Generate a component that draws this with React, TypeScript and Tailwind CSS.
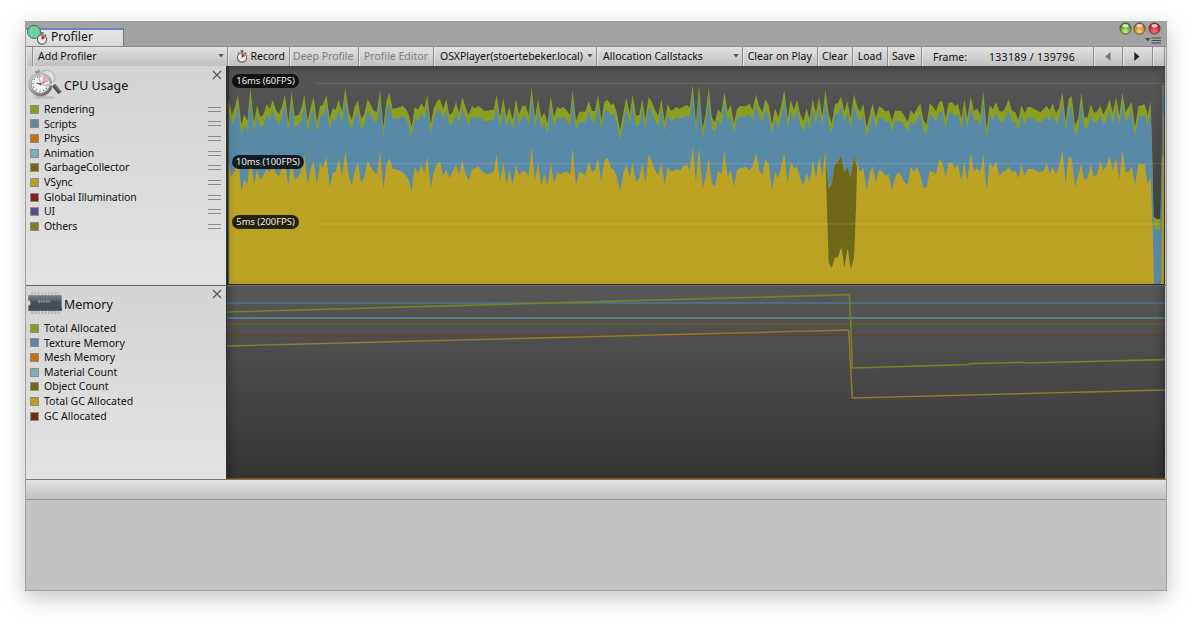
import { ReactNode } from "react";

type Entry = { name: string; swatch: string };
type Segment = [number, string];

const cpuEntries: Entry[] = [
  { name: "Rendering", swatch: "bg-[#8a9f22]" },
  { name: "Scripts", swatch: "bg-[#588aa8]" },
  { name: "Physics", swatch: "bg-[#c27311]" },
  { name: "Animation", swatch: "bg-[#7ab0ba]" },
  { name: "GarbageCollector", swatch: "bg-[#706a17]" },
  { name: "VSync", swatch: "bg-[#bba223]" },
  { name: "Global Illumination", swatch: "bg-[#7c270c]" },
  { name: "UI", swatch: "bg-[#614b8b]" },
  { name: "Others", swatch: "bg-[#7d7d25]" },
];

const memoryEntries: Entry[] = [
  { name: "Total Allocated", swatch: "bg-[#8a9f22]" },
  { name: "Texture Memory", swatch: "bg-[#588aa8]" },
  { name: "Mesh Memory", swatch: "bg-[#c27311]" },
  { name: "Material Count", swatch: "bg-[#7ab0ba]" },
  { name: "Object Count", swatch: "bg-[#706a17]" },
  { name: "Total GC Allocated", swatch: "bg-[#bba223]" },
  { name: "GC Allocated", swatch: "bg-[#7c270c]" },
];

// each segment is an x offset followed by x,y samples, three units per pixel
const renderingTop: Segment[] = [
  [0, "8,106 18,150 27,125 36,90 46,178 55,148 64,168 73,70 84,172 93,120 103,155 112,150 122,117 131,133 140,105 150,135 159,148 168,125 177,88 187,172 197,78 206,153 217,150 226,132 235,90 245,168 254,125 263,96 273,172 282,123 291,120 301,90 311,160 320,130 329,135 338,103 348,140 358,68 368,138 377,165 386,125 396,106 405,160 414,150 425,103 434,120 444,138 453,140 462,75 472,185 481,110 490,82 500,132 515,128 530,123 540,132 548,148 557,185 566,126 576,135 586,115 595,130 604,90 614,178 623,130 633,108 642,102 651,132 661,103 670,150 680,142 690,110 699,145 709,96 718,125 728,150 738,123 747,130 757,123 775,138 803,134 812,90 822,155 832,100 841,155 850,125 860,165 870,101 879,148 889,122 899,122 908,150 917,66 927,157 936,102 946,158 955,142"],
  [960, "5,175 14,92 24,155 34,125 43,132 52,125 62,136 72,150 80,76 90,168 100,140 118,140 128,107 138,138 147,138 156,88 166,165 175,110 185,104 195,120 203,115 213,145 222,195 232,145 241,97 251,148 260,88 270,152 280,150 289,102 298,163 308,96 318,112 327,136 337,152 346,102 356,170 365,117 375,138 392,126 400,131 422,120 431,128 440,60 450,172 459,60 470,190 479,145 488,68 498,160 507,170 516,133 526,145 535,80 545,140 554,118 564,175 573,132 583,123 600,124 611,116 620,135 630,88 640,125 649,142 658,103 668,120 678,178 687,130 697,155 706,120 715,75 725,160 734,105 744,135 753,105 763,148 772,168 782,130 791,162 800,102 810,145 819,95 829,152 838,75 848,148 857,175 867,117 876,115 885,94 895,140 904,108 914,160 924,87 934,125"],
  [1902, "0,140 10,117 20,188 29,150 38,115 48,160 57,124 67,130 77,140 86,135 96,168 105,137 123,137 133,152 143,170 152,135 162,148 171,130 181,115 190,165 200,178 209,115 219,125 228,138 238,110 247,108 257,158 266,113 276,112 285,123 294,116 304,160 313,103 322,160 332,95 342,138 351,130 361,150 370,80 380,190 389,120 398,133 408,112 418,138 428,140 437,125 446,103 456,138 466,142 475,165 484,120 494,145 503,126 512,126 541,142 560,123 569,136 578,115 588,145 597,130 607,80 617,170 626,103 635,92 645,180 655,160 664,82 673,157 683,157 692,118 702,143 711,140 721,122 730,148 740,130 749,103 758,145 768,97 778,150 787,83 797,142 806,125 815,110 825,185 835,124 854,118 863,150 872,108 876,240 881,455 890,462 901,463 903,380 906,220 908,60 912,60"],
];

const vsyncTop: Segment[] = [
  [0, "8,290 16,335 27,315 36,270 46,378 55,342 64,360 73,263 84,358 93,315 103,345 112,330 122,312 131,322 140,300 150,325 159,335 168,310 177,290 187,362 197,268 206,345 217,335 226,315 235,270 245,357 254,310 263,288 273,357 282,295 291,308 301,273 311,365 320,325 329,320 338,278 348,335 358,258 368,330 377,362 386,318 396,292 405,352 414,338 425,288 434,305 444,320 453,328 462,258 472,370 481,300 490,278 500,312 515,314 530,322 548,342 557,380 566,305 576,325 586,300 595,322 604,275 614,370 623,322 633,298 642,290 651,332 661,315 670,340 680,320 690,298 699,330 709,285 718,325 728,347 738,312 747,310 757,303 766,318 785,328 803,320 812,268 822,347 832,290 841,357 850,318 860,357 870,300 879,330 889,318 899,320 908,332 917,245 927,347 936,295 946,360 955,328"],
  [960, "5,362 14,295 24,355 34,322 43,328 62,318 72,330 80,250 90,358 100,320 118,330 128,290 138,322 147,315 156,278 166,350 175,288 185,278 195,310 203,313 213,335 222,378 232,325 241,298 251,335 260,292 270,350 280,340 289,290 298,355 308,268 318,292 327,315 337,330 346,294 356,357 365,305 375,320 392,313 403,317 412,302 422,298 431,315 440,246 450,352 459,248 470,372 479,335 488,278 498,355 507,363 516,318 526,327 535,258 545,335 554,315 564,367 573,315 583,310 600,305 611,316 620,304 630,265 640,315 649,330 658,282 668,298 678,377 687,320 697,340 706,300 715,265 725,353 734,290 744,310 753,305 763,340 772,362 782,325 791,350 800,288 810,338 819,275 829,333 838,255 843,325 848,372 857,358 867,297 876,290 885,272 895,322 904,305 914,340 924,273 934,300"],
  [1902, "0,320 10,308 20,375 29,325 38,304 48,350 57,313 67,320 77,333 86,328 96,375 105,337 115,322 124,332 133,352 143,360 152,305 162,320 171,305 181,330 190,368 200,366 209,317 219,320 228,326 238,284 247,292 257,335 266,293 276,293 285,310 294,298 304,347 313,290 322,348 332,265 342,318 351,310 361,320 370,268 380,376 389,292 398,308 408,290 418,332 428,320 437,317 446,305 456,320 466,317 475,340 484,298 494,332 503,312 518,312 536,322 551,317 560,295 569,326 578,305 588,328 597,305 607,255 617,353 626,276 635,280 645,365 655,330 664,295 673,345 683,340 692,298 702,335 711,328 721,290 730,318 740,300 749,273 758,318 768,278 778,343 787,255 797,323 806,320 816,305 825,360 835,297 854,297 863,357 872,335 878,500 882,657 903,657 906,450 909,150 912,150"],
];

function area(segments: Segment[]) {
  const points = segments.flatMap(([offset, data]) =>
    data.split(" ").map((pair) => {
      const [x, y] = pair.split(",").map(Number);
      return `${x + offset},${y}`;
    })
  );
  return `8,657 ${points.join(" ")} 2814,657`;
}

function StopwatchIcon() {
  return (
    <svg className="h-[13px] w-[12px] shrink-0" viewBox="0 0 12 13">
      <path d="M4.4 .8h3.2M6 1v2M10 2.6l-1 1M2 2.6l1 1" stroke="#555" strokeWidth="1.3" fill="none" />
      <circle cx="6" cy="7.5" r="4.6" fill="#eee" stroke="#666" strokeWidth="1.2" />
      <path d="M6 7.5V3.8a3.7 3.7 0 0 1 3.2 2.1z" fill="#e22134" />
      <path d="M6 7.6V4" stroke="#a11" strokeWidth=".7" />
    </svg>
  );
}

function CpuIcon() {
  return (
    <svg className="h-[31px] w-[36px] shrink-0" viewBox="0 0 36 31">
      <defs>
        <linearGradient id="steel" x1="0" y1="0" x2="1" y2="1">
          <stop offset="0" stopColor="#eee" />
          <stop offset=".5" stopColor="#999" />
          <stop offset="1" stopColor="#505050" />
        </linearGradient>
      </defs>
      <ellipse cx="16" cy="28.5" rx="11" ry="1.6" fill="#000" opacity=".12" />
      <path d="M7 3.5l5-2M9.5 2.5l1.5 4" stroke="#999" strokeWidth="2.4" />
      <circle cx="12.5" cy="15.5" r="11.8" fill="url(#steel)" stroke="#888" strokeWidth=".6" />
      <circle cx="12.5" cy="15" r="9.3" fill="#f3f3f3" stroke="#888" strokeWidth=".8" />
      <circle cx="12.5" cy="15" r="7.4" fill="none" stroke="#555" strokeWidth="1.3" strokeDasharray="1 2.87" />
      <path d="M13 15l2.5-8.5a10 10 0 0 1 6 5z" fill="#ea6a6a" opacity=".7" />
      <path d="M12.5 15l5-2.5M12.5 15l-4-1" stroke="#444" strokeWidth="1" />
      <circle cx="12.5" cy="15" r="1.2" fill="#444" />
      <circle cx="19" cy="9" r="7.8" fill="#fff" fillOpacity=".28" stroke="#bbb" strokeWidth="1.4" />
      <path d="M24 14.5l3 3" stroke="#e4e4e4" strokeWidth="3.6" />
      <path d="M25.5 16l6.5 8" stroke="#4c4c4c" strokeWidth="4" />
      <path d="M26 15.5l6 7.5" stroke="#999" strokeWidth=".8" />
    </svg>
  );
}

function ChipIcon() {
  return (
    <svg className="h-[24px] w-[36px] shrink-0" viewBox="0 0 36 24">
      <defs>
        <linearGradient id="chip" x1="0" y1="0" x2="0" y2="1">
          <stop offset="0" stopColor="#747b83" />
          <stop offset=".5" stopColor="#50575f" />
          <stop offset="1" stopColor="#3a4149" />
        </linearGradient>
      </defs>
      <path d="M3 2.8h29" stroke="#bdbdbd" strokeWidth="3" strokeDasharray="2 1.4" />
      <path d="M3 21h29" stroke="#b4b4b4" strokeWidth="4" strokeDasharray="2 1.4" />
      <path d="M.5 4.5h33v15H.5v-5a2.5 2.5 0 0 0 0-5z" fill="url(#chip)" stroke="#747a80" strokeWidth=".5" />
      <path d="M2 11.5h31" stroke="#39414a" strokeWidth="4" opacity=".4" />
      <path d="M10 10.5h12" stroke="#a9afb5" strokeWidth="2.4" strokeDasharray="2 .6" opacity=".6" />
      <path d="M1 17h33v2.5H1z" fill="#434b53" />
    </svg>
  );
}

function WindowLight({ id, outer, inner }: { id: string; outer: string; inner: string }) {
  return (
    <svg className="size-[13px]" viewBox="0 0 13 13">
      <defs>
        <radialGradient id={id} cx=".5" cy=".75" r=".65">
          <stop offset="0" stopColor={inner} />
          <stop offset="1" stopColor={outer} />
        </radialGradient>
      </defs>
      <circle cx="6.5" cy="6.5" r="5.6" fill={`url(#${id})`} stroke="#3d4a28" strokeOpacity=".75" />
      <ellipse cx="6.5" cy="3.7" rx="3.1" ry="1.8" fill="#fff" opacity=".75" />
    </svg>
  );
}

function Caret() {
  return (
    <svg className="mb-px h-[4px] w-[6px] shrink-0" viewBox="0 0 6 4">
      <path d="M.3 0h5.4L3 3.6z" fill="#555" />
    </svg>
  );
}

function ToolbarItem({ className, children }: { className: string; children?: ReactNode }) {
  return (
    <div
      className={`flex h-full shrink-0 items-center whitespace-nowrap border-r border-[#8d8d8d] shadow-[inset_1px_0_0_#e4e4e4] ${className}`}
    >
      {children}
    </div>
  );
}

function Legend({ entries, handles }: { entries: Entry[]; handles?: boolean }) {
  return (
    <ul className="pl-[4px] pr-[5px]">
      {entries.map((entry) => (
        <li key={entry.name} className="flex h-[14.625px] items-center text-[10.5px]">
          <span className={`mr-[5px] size-[9px] shrink-0 border border-[#8c8c8c] ${entry.swatch}`} />
          <span className={`flex-1 pt-px whitespace-nowrap ${handles ? "tracking-[-0.08px]" : ""}`}>{entry.name}</span>
          {handles && <span className="h-[5px] w-[13px] border-y border-[#8a8a8a]" />}
        </li>
      ))}
    </ul>
  );
}

type PanelProps = { icon: ReactNode; title: string; headerClass: string; children: ReactNode };

function ProfilerPanel({ icon, title, headerClass, children }: PanelProps) {
  return (
    <div className="h-full w-[201px] shrink-0 border-r border-[#333] bg-linear-to-b from-[#d4d4d4] to-[#e2e2e2]">
      <div className={`flex items-center pl-[2px] pr-[4px] ${headerClass}`}>
        {icon}
        <span className="flex-1 pt-[4px] text-[12.4px]">{title}</span>
        <svg className="mb-[18px] size-[10px]" viewBox="0 0 10 10">
          <path d="M1 1l8 8M9 1L1 9" stroke="#555" strokeWidth="1.1" />
        </svg>
      </div>
      {children}
    </div>
  );
}

function TimeLabel({ className, children }: { className: string; children: string }) {
  return (
    <span
      className={`absolute left-[5px] flex h-[14px] items-center justify-center rounded-full bg-black/80 text-[9.4px] whitespace-nowrap text-[#eee] ${className}`}
    >
      {children}
    </span>
  );
}

function CpuChart() {
  const rendering = area(renderingTop);
  return (
    <div className="relative h-[219px] w-[938px] bg-linear-to-b from-[#585858] to-[#353535]">
      <svg className="block h-[219px] w-[938px]" viewBox="3 3 2814 657">
        <polygon points={rendering} fill="#8a9f22" />
        <polygon points={rendering} fill="#588aa8" transform="translate(0 31)" />
        <rect x="8" y="657" width="2809" height="3" fill="#3a3a30" />
        <polygon points={area(vsyncTop)} fill="#bba223" />
        <rect x="2809" y="66" width="3" height="210" fill="#4f7488" />
        <polygon
          transform="translate(960 0)"
          points="838,275 843,325 848,372 857,358 867,297 876,290 885,272 895,322 904,305 914,340 924,272 933,305 930,430 924,580 914,612 905,548 895,608 886,545 876,577 867,577 857,610 848,592 843,430"
          fill="#6e6818"
        />
        <path d="M272 58H2817M272 299H2817M272 480H2817" stroke="#fff" strokeOpacity=".11" strokeWidth="4" transform="translate(0 -3)" />
      </svg>
      <div className="pointer-events-none absolute inset-0 shadow-[inset_0_3px_8px_rgba(0,0,0,.3),inset_2px_0_1px_rgba(0,0,0,.3)]" />
      <TimeLabel className="top-[8px] w-[67px]">16ms (60FPS)</TimeLabel>
      <TimeLabel className="top-[89px] w-[72px]">10ms (100FPS)</TimeLabel>
      <TimeLabel className="top-[149px] w-[67px]">5ms (200FPS)</TimeLabel>
    </div>
  );
}

function MemoryChart() {
  return (
    <div className="relative h-[193px] w-[938px] bg-linear-to-b from-[#585858] via-[#474747] to-[#343434]">
      <svg className="block h-[193px] w-[938px]" viewBox="3 18 2814 579" fill="none">
        <path d="M3 69H2817" stroke="#4f6d7e" strokeWidth="6" />
        <path d="M3 114H2817" stroke="#618a90" strokeWidth="5" />
        <path d="M3 132H2817" stroke="#605b2c" strokeWidth="6" />
        <path d="M3 167H2817" stroke="#674130" strokeWidth="6" />
        <path d="M3 96L1870 44L1875 150L1879 264L2222 254L2232 251L2392 247L2398 249L2817 239" stroke="#748126" strokeWidth="4.8" />
        <path d="M3 198L1868 150L1879 354L2817 330" stroke="#8e7b2c" strokeWidth="4.8" />
        <path d="M3 595H2817" stroke="#8a500b" strokeWidth="4" />
      </svg>
      <div className="pointer-events-none absolute inset-0 shadow-[inset_8px_0_8px_-6px_rgba(0,0,0,.35),inset_-8px_0_8px_-6px_rgba(0,0,0,.35)]" />
    </div>
  );
}

function App() {
  return (
    <div className="h-[621px] w-[1192px] overflow-hidden bg-white pt-[21px] pl-[25px] font-['Noto_Sans',sans-serif] text-[#111]">
      <div className="flex h-[570px] w-[1142px] flex-col border border-[#a0a0a0] bg-[#c2c2c2] shadow-[0_7px_20px_rgba(0,0,0,.24)]">
        <div className="flex h-[24px] justify-between bg-[#a2a2a2]">
          <div className="relative mt-[6px] flex h-[18px] w-[98px] items-center border-t-2 border-r border-t-[#6685cc] border-r-[#777] bg-linear-to-b from-[#e5e5e5] to-[#d9d9d9] pl-[10px] text-[12.2px]">
            <StopwatchIcon />
            <span className="pb-px pl-[3px]">Profiler</span>
            <span className="absolute -top-[5px] left-px size-[14px] rounded-full border border-[#4f6b5b] bg-[#70d09d]" />
          </div>
          <div className="flex flex-col items-end pr-[5px]">
            <div className="flex gap-[1.7px]">
              <WindowLight id="green" outer="#3c8518" inner="#c9f080" />
              <WindowLight id="amber" outer="#bd5512" inner="#ffdf76" />
              <WindowLight id="red" outer="#a90e18" inner="#ff777b" />
            </div>
            <svg className="mt-[2px] h-[7px] w-[16px]" viewBox="0 0 16 7">
              <path d="M0 1h5.4L2.7 4.5z" fill="#484848" />
              <path d="M6.5 1H16M6.5 3.5H16M6.5 6H16" stroke="#484848" />
            </svg>
          </div>
        </div>
        <div className="flex h-[20px] border-t border-[#8b8b8b] bg-linear-to-b from-[#e1e1e1] to-[#c0c0c0] text-[10.5px]">
          <ToolbarItem className="w-[6.5px]" />
          <ToolbarItem className="w-[195px] justify-between pr-[3px] pl-[5.5px]">
            Add Profiler
            <Caret />
          </ToolbarItem>
          <ToolbarItem className="w-[62px] gap-[3px] pl-[8px]">
            <StopwatchIcon />
            Record
          </ToolbarItem>
          <ToolbarItem className="w-[69.5px] justify-center pr-px text-[#808080]">Deep Profile</ToolbarItem>
          <ToolbarItem className="w-[75px] justify-center text-[#808080]">Profile Editor</ToolbarItem>
          <ToolbarItem className="w-[163px] justify-between pr-[3px] pl-[6px]">
            <span className="tracking-[-0.05px]">OSXPlayer(stoertebeker.local)</span>
            <Caret />
          </ToolbarItem>
          <ToolbarItem className="w-[146px] justify-between pr-[3px] pl-[6px]">
            Allocation Callstacks
            <Caret />
          </ToolbarItem>
          <ToolbarItem className="w-[74.5px] justify-center">Clear on Play</ToolbarItem>
          <ToolbarItem className="w-[35.5px] justify-center">Clear</ToolbarItem>
          <ToolbarItem className="w-[34.5px] justify-center">Load</ToolbarItem>
          <ToolbarItem className="w-[34px] justify-start pl-[4.5px]">Save</ToolbarItem>
          <ToolbarItem className="w-[172px] pt-[2px] pl-[11.5px]">
            <span className="w-[56px]">Frame:</span>
            <span className="tracking-[0.3px]">133189 / 139796</span>
          </ToolbarItem>
          <ToolbarItem className="w-[29px] justify-center">
            <svg className="h-[9px] w-[6px]" viewBox="0 0 6 9">
              <path d="M5.5 0v9L.3 4.5z" fill="#777" />
            </svg>
          </ToolbarItem>
          <ToolbarItem className="w-[30px] justify-center">
            <svg className="h-[9px] w-[6px]" viewBox="0 0 6 9">
              <path d="M.3 0v9l5.2-4.5z" fill="#222" />
            </svg>
          </ToolbarItem>
          <ToolbarItem className="w-[12px]" />
        </div>
        <div className="flex h-[220px] border-b border-[#666] bg-[#c2c2c2]">
          <ProfilerPanel icon={<CpuIcon />} title="CPU Usage" headerClass="h-[36px]">
            <Legend entries={cpuEntries} handles />
          </ProfilerPanel>
          <CpuChart />
        </div>
        <div className="flex h-[194px] border-b border-[#777]">
          <ProfilerPanel icon={<ChipIcon />} title="Memory" headerClass="-mt-px h-[36px]">
            <Legend entries={memoryEntries} />
          </ProfilerPanel>
          <MemoryChart />
        </div>
        <div className="h-[20px] border-b border-[#949494] bg-linear-to-b from-[#e3e3e3] to-[#bfbfbf]" />
      </div>
    </div>
  );
}

export default App;
